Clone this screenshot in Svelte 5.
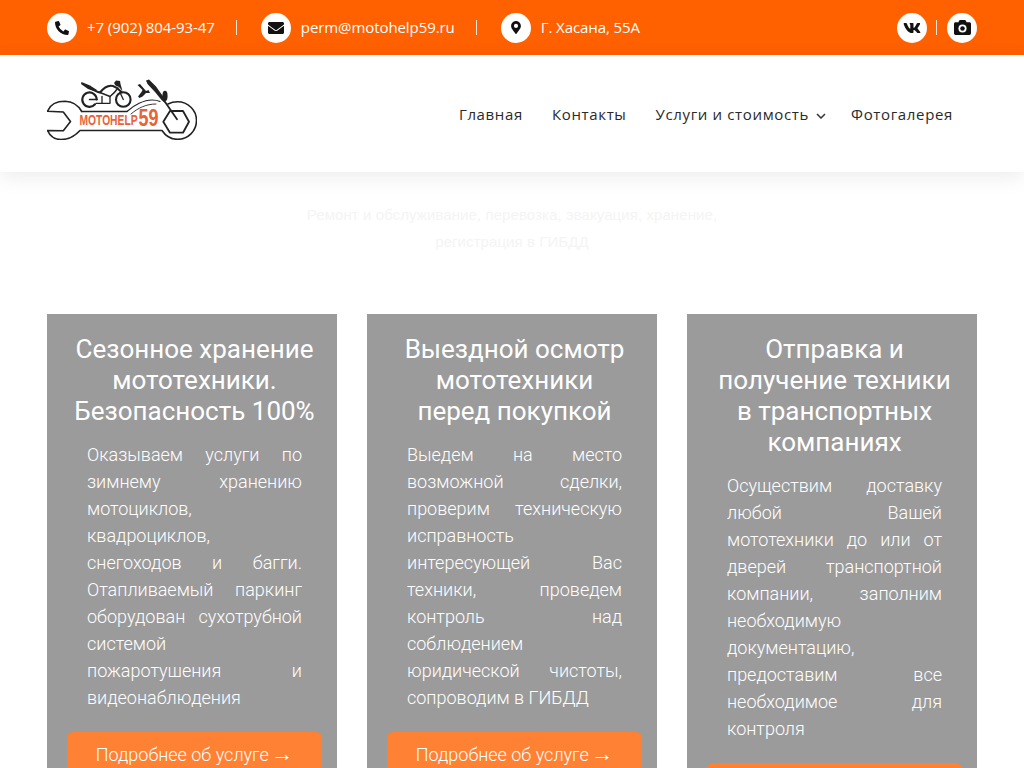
<script>
    const contacts = [
        { icon: "phone", text: "+7 (902) 804-93-47" },
        { icon: "mail", text: "perm@motohelp59.ru" },
        { icon: "pin", text: "Г. Хасана, 55А" },
    ];

    const nav = [
        { label: "Главная" },
        { label: "Контакты" },
        { label: "Услуги и стоимость", sub: true },
        { label: "Фотогалерея" },
    ];

    const services = [
        {
            title: "Сезонное хранение мототехники. Безопасность 100%",
            text: "Оказываем услуги по зимнему хранению мотоциклов, квадроциклов, снегоходов и багги. Отапливаемый паркинг оборудован сухотрубной системой пожаротушения и видеонаблюдения",
        },
        {
            title: "Выездной осмотр мототехники\nперед покупкой",
            text: "Выедем на место возможной сделки, проверим техническую исправность интересующей Вас техники, проведем контроль над соблюдением юридической чистоты, сопроводим в ГИБДД",
        },
        {
            title: "Отправка и\nполучение техники\nв транспортных компаниях",
            text: "Осуществим доставку любой Вашей мототехники до или от дверей транспортной компании, заполним необходимую документацию, предоставим все необходимое для контроля",
        },
    ];
</script>

{#snippet icon(name)}
    {#if name === "phone"}
        <svg viewBox="0 0 512 512" width="14" height="14"><path d="M497.39 361.8l-112-48a24 24 0 0 0-28 6.9l-49.6 60.6A370.66 370.66 0 0 1 130.6 204.11l60.6-49.6a23.94 23.94 0 0 0 6.9-28l-48-112A24.16 24.16 0 0 0 122.6.61l-104 24A24 24 0 0 0 0 48c0 256.5 207.9 464 464 464a24 24 0 0 0 23.4-18.6l24-104a24.29 24.29 0 0 0-14.01-27.6z" /></svg>
    {:else if name === "mail"}
        <svg viewBox="0 0 512 512" width="16" height="16"><path d="M502.3 190.8c3.9-3.1 9.7-.2 9.7 4.7V400c0 26.5-21.5 48-48 48H48c-26.5 0-48-21.5-48-48V195.6c0-5 5.7-7.8 9.7-4.7 22.4 17.4 52.1 39.5 154.1 113.6 21.1 15.4 56.7 47.8 92.2 47.6 35.7.3 72-32.8 92.3-47.6 102-74.1 131.6-96.3 154-113.7zM256 320c23.2.4 56.6-29.2 73.4-41.4 132.7-96.3 142.8-104.7 173.4-128.7 5.8-4.5 9.2-11.5 9.2-18.9v-19c0-26.5-21.5-48-48-48H48C21.5 64 0 85.5 0 112v19c0 7.4 3.4 14.3 9.2 18.9 30.6 23.9 40.7 32.4 173.4 128.7 16.8 12.2 50.2 41.8 73.4 41.4z" /></svg>
    {:else if name === "pin"}
        <svg viewBox="0 0 384 512" width="10" height="13"><path d="M172.268 501.67C26.97 291.031 0 269.413 0 192 0 85.961 85.961 0 192 0s192 85.961 192 192c0 77.413-26.97 99.031-172.268 309.67-9.535 13.774-29.93 13.773-39.464 0zM192 272c44.183 0 80-35.817 80-80s-35.817-80-80-80-80 35.817-80 80 35.817 80 80 80z" /></svg>
    {:else if name === "vk"}
        <svg viewBox="0 0 576 512" width="18" height="16"><path d="M545 118c4-12 0-22-18-22h-59c-15 0-22 8-26 17 0 0-29 72-71 118-14 14-20 18-27 18-4 0-9-4-9-17V118c0-15-4-22-17-22h-92c-9 0-15 7-15 14 0 14 21 17 23 57v87c0 19-3 22-11 22-20 0-69-73-98-157-6-16-12-23-26-23H40c-17 0-20 8-20 17 0 15 20 93 93 196 49 70 118 108 180 108 37 0 42-8 42-23v-53c0-17 4-20 15-20 9 0 24 4 59 38 40 40 46 58 69 58h59c17 0 25-8 20-25-5-16-24-40-48-68-14-16-34-33-40-42-9-11-6-16 0-25 0 0 72-101 79-136z" /></svg>
    {:else}
        <svg viewBox="0 0 512 512" width="17" height="17"><path d="M512 144v288c0 26.5-21.5 48-48 48H48c-26.500 0-48-21.500-48-48V144c0-26.500 21.500-48 48-48h88l12.300-32.900c7-18.700 24.900-31.100 44.900-31.100h125.500c20 0 37.900 12.400 44.900 31.100L376 96h88c26.500 0 48 21.500 48 48z" /><circle cx="256" cy="288" r="122" fill="#fff" /><circle cx="256" cy="288" r="68" /></svg>
    {/if}
{/snippet}

<div class="topbar">
    <div class="container bar-row">
        <div class="contacts">
            {#each contacts as c}
                <div class="contact">
                    <span class="circle">{@render icon(c.icon)}</span>
                    <span class="contact-text">{c.text}</span>
                </div>
            {/each}
        </div>
        <div class="social">
            <span class="circle">{@render icon("vk")}</span>
            <span class="sep"></span>
            <span class="circle">{@render icon("camera")}</span>
        </div>
    </div>
</div>

<header class="header">
    <div class="container header-row">
        <svg class="logo" viewBox="47 78 150 62" width="150" height="62">
            <g fill="none" stroke="#222" stroke-width="1.6" stroke-linejoin="round" stroke-linecap="round">
                <!-- wrench: jaw, handle and ring -->
                <path d="M81.700 111.500C78 105 72 101.500 65 101.300 56 101.300 50 105 47.500 111.300L63.300 112 70.500 121.500 63.300 130.700 47.500 130.500C50 136 55 139.500 61 139.500 68 139.500 75 136 80 130.500H162C166 136.500 171 139.300 177.500 139.300 188 139.300 196.500 131 196.500 120.500 196.500 110 188 101.800 177.500 101.800 174 101.800 171 102.500 168 104" />
                <path d="M81.700 111.500H127" />
                <path d="M170 111H183L189 121.700 183 132.700H170L163.300 121.700Z" stroke-width="1.800" />
                <path d="M127 111.500C134 105 144 100 152 100 156 100 158 100.500 160 101.500" stroke-width="1.100" />
                <path d="M131 114C138 108 146 104 156 104" stroke-width="0.900" />
                <path d="M163 99L177 119.300" stroke-width="1.800" />
                <!-- sport bike -->
                <path d="M96.700 99.500A7.200 7.200 0 1 0 95 104.300" stroke-width="2.100" />
                <path d="M89.500 99.500H97" stroke-width="1.500" />
                <circle cx="123.300" cy="99.500" r="7.300" stroke-width="2.100" />
                <path d="M123.300 99.500L120 92.500" stroke-width="1.300" />
                <path d="M96 103.300H110V96.500" stroke-width="1.300" />
                <path d="M102 96.500V103" stroke-width="1.300" />
                <path d="M90 88C94 90 97 92 100 92.500 103 89 107 84.500 113 86 116 87 119 89 121.500 92" stroke-width="2" />
                <path d="M100 92.500L110 96.500C113 94 116 91 118 88" stroke-width="1.400" />
            </g>
            <g fill="#222" stroke="none">
                <path d="M81.500 82L90 85.500 97 90 95.500 91.500 88 89 81 84Z" />
                <path d="M114 83L116 80.500 120 81 120.500 84 122.500 91 119 87 115.500 85.500Z" />
                <!-- cruiser fork and controls -->
                <path d="M146 80.500L149 79.500 156 86.500 163.500 97 165 103 161.500 100 155 92 147.500 84Z" />
                <path d="M137.500 85L140 84 146 91 148.500 90 150 93 146 93 142.500 96.500 139.500 98 138 96.500 141.500 92 142.500 90Z" />
                <ellipse cx="165" cy="96" rx="2.600" ry="5.200" />
            </g>
            <text class="logo-small" x="79.500" y="125.300" textLength="58" lengthAdjust="spacingAndGlyphs">MOTOHELP</text>
            <text class="logo-big" x="138.500" y="126" textLength="20" lengthAdjust="spacingAndGlyphs">59</text>
        </svg>
        <nav class="nav">
            {#each nav as item}
                <span class="nav-item">
                    {item.label}{#if item.sub}<svg class="chev" viewBox="0 0 10 6" width="10" height="6"><path d="M1 1l4 4 4-4" fill="none" stroke="#333" stroke-width="1.500" /></svg>{/if}
                </span>
            {/each}
        </nav>
    </div>
</header>

<main class="container main">
    <p class="subtitle">Ремонт и обслуживание, перевозка, эвакуация, хранение, регистрация в ГИБДД</p>
    <div class="cards">
        {#each services as s}
            <section class="card">
                <h3>{s.title}</h3>
                <p>{s.text}</p>
                <button class="more">Подробнее об услуге <span class="arrow">→</span></button>
            </section>
        {/each}
    </div>
</main>

<style>
    :global(html),
    :global(body) {
        overflow: hidden;
    }

    :global(body) {
        font-family: Roboto, sans-serif;
        background: #fff;
    }

    .container {
        width: 930px;
        margin: 0 auto;
    }

    .topbar {
        height: 55px;
        background: #ff6000;
        color: #fff;
        font-family: "Open Sans", sans-serif;
        font-size: 15px;
        letter-spacing: -0.08px;
    }

    .bar-row {
        height: 55px;
        display: flex;
        justify-content: space-between;
        align-items: center;
    }

    .contacts,
    .social {
        display: flex;
        align-items: center;
    }

    .contact {
        display: flex;
        align-items: center;
        gap: 10px;
        padding-right: 22px;
        margin-right: 24px;
        position: relative;
    }

    .contact-text {
        margin-top: -2px;
    }

    .contact:not(:last-child)::after {
        content: "";
        position: absolute;
        right: 0;
        top: 7px;
        height: 15px;
        width: 1px;
        background: #ffe3d0;
    }

    .circle {
        width: 30px;
        height: 30px;
        border-radius: 50%;
        background: #fff;
        display: flex;
        align-items: center;
        justify-content: center;
        fill: #111;
    }

    .sep {
        width: 1px;
        height: 15px;
        margin: 0 10px 0 9px;
        background: #ffe3d0;
    }

    .header {
        height: 117px;
        background: #fff;
        box-shadow: 0 5px 20px rgba(0, 0, 0, 0.08);
        position: relative;
    }

    .header-row {
        height: 117px;
        display: flex;
        justify-content: space-between;
        align-items: center;
    }

    .logo {
        margin-bottom: 9px;
    }

    .logo-small {
        font: bold 14px "Liberation Sans", sans-serif;
        fill: #e8623a;
    }

    .logo-big {
        font: bold 23px "Liberation Sans", sans-serif;
        fill: #e8623a;
    }

    .nav {
        display: flex;
        align-items: center;
        gap: 29px;
        margin-right: 24px;
        font-family: "Open Sans", sans-serif;
        font-size: 15px;
        letter-spacing: 0.65px;
        color: #2a2a2a;
    }

    .nav-item {
        white-space: nowrap;
    }

    .chev {
        margin: 0 -4px 0 7px;
        vertical-align: 1px;
    }

    .main {
        padding-top: 29px;
    }

    .subtitle {
        width: 440px;
        margin: 0 auto 59px;
        font-family: "Liberation Sans", sans-serif;
        font-size: 15px;
        letter-spacing: 0.08px;
        line-height: 27px;
        text-align: center;
        color: #f4f4f4;
    }

    .cards {
        display: grid;
        grid-template-columns: repeat(3, 290px);
        gap: 30px;
    }

    .card {
        background: #9b9b9b;
        color: #fff;
        padding: 20px 15px 20px 20px;
    }

    .card h3 {
        margin: 0 0 14px;
        font-size: 26px;
        font-weight: 400;
        line-height: 31px;
        text-align: center;
        white-space: pre-line;
    }

    .card p {
        margin: 0 20px 21px;
        font-size: 18px;
        font-weight: 300;
        line-height: 27px;
        text-align: justify;
    }

    .more {
        display: block;
        width: 100%;
        padding: 9px 10px 11px;
        border: none;
        border-radius: 6px;
        background: #ff8133;
        color: #fff;
        font-family: Roboto, sans-serif;
        font-size: 18px;
        font-weight: 300;
        line-height: 27px;
    }

    .arrow {
        margin-left: -2px;
        font-family: "Liberation Sans", sans-serif;
        font-size: 22px;
        line-height: 0;
    }
</style>
